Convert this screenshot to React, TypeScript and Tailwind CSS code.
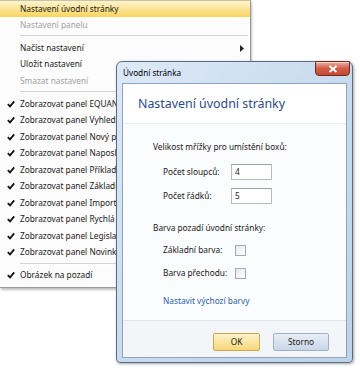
import React from "react";

const Check = () => (
  <svg width="8" height="8" viewBox="0 0 8 8" className="block">
    <path d="M0.8 4.2 L3 6.4 L7.2 1.4" fill="none" stroke="#111" strokeWidth="1.7" />
  </svg>
);

type Item = { label: string; disabled?: boolean; checked?: boolean; hi?: boolean; sub?: boolean } | "sep";

const items: Item[] = [
  { label: "Nastavení úvodní stránky", hi: true },
  { label: "Nastavení panelu", disabled: true },
  "sep",
  { label: "Načíst nastavení", sub: true },
  { label: "Uložit nastavení" },
  { label: "Smazat nastavení", disabled: true },
  "sep",
  { label: "Zobrazovat panel EQUANT", checked: true },
  { label: "Zobrazovat panel Vyhledávání", checked: true },
  { label: "Zobrazovat panel Nový předpis", checked: true },
  { label: "Zobrazovat panel Naposledy", checked: true },
  { label: "Zobrazovat panel Příklady", checked: true },
  { label: "Zobrazovat panel Základní", checked: true },
  { label: "Zobrazovat panel Importy", checked: true },
  { label: "Zobrazovat panel Rychlá volba", checked: true },
  { label: "Zobrazovat panel Legislativa", checked: true },
  { label: "Zobrazovat panel Novinky", checked: true },
  "sep",
  { label: "Obrázek na pozadí", checked: true },
];

function Menu() {
  return (
    <div className="w-[251px] bg-[#fcfcfc] border-r border-b border-[#9a9a9a] shadow-[1px_2px_2px_rgba(0,0,0,0.25)] pb-[3px]">
      {items.map((it, i) =>
        it === "sep" ? (
          <div key={i} className="h-[6.5px] flex items-center pl-[20px] pr-[2px]">
            <div className="h-[2px] w-full border-t border-[#d4d4d4] border-b-white border-b" />
          </div>
        ) : (
          <div
            key={i}
            className={`h-[16.5px] flex items-center relative ${
              it.hi ? "bg-gradient-to-b from-[#fdf4cc] to-[#f9d455] border-t border-[#c9c2a6]" : ""
            }`}
          >
            <div className="w-[20px] flex justify-center pl-[1px]">{it.checked ? <Check /> : null}</div>
            <span className={`whitespace-nowrap ${it.disabled ? "text-[#a2a2a2]" : "text-[#1a1a1a]"}`}>{it.label}</span>
            {it.sub ? (
              <svg width="4" height="7" viewBox="0 0 4 7" className="absolute right-[6px] top-[5px]">
                <path d="M0 0 L4 3.5 L0 7 Z" fill="#222" />
              </svg>
            ) : null}
          </div>
        )
      )}
    </div>
  );
}

function Dialog() {
  return (
    <div className="absolute left-[116px] top-[61px] w-[237px] h-[302px] rounded-t-[6px] rounded-b-[4px] border border-[#5b6c82] bg-gradient-to-br from-[#dde9f7] via-[#c9dbef] to-[#bed2ea] flex flex-col px-[5px] pb-[4px] shadow-[1px_1px_3px_rgba(0,0,0,0.35)]">
      <div className="h-[21px] flex items-center pl-[1px] text-[8.2px] text-black">Úvodní stránka</div>
      <div className="absolute right-[2px] top-[-1px] w-[35px] h-[15px] rounded-b-[4px] border border-[#6e2a22] bg-gradient-to-b from-[#eab0a3] via-[#d25c47] to-[#c44a34] flex items-center justify-center shadow-[inset_0_1px_0_rgba(255,255,255,0.5)]">
        <svg width="10" height="8" viewBox="0 0 10 8">
          <path d="M1.5 1 L8.5 7 M8.5 1 L1.5 7" stroke="#fff" strokeWidth="2" />
        </svg>
      </div>
      <div className="flex-1 border border-[#8ea3bd] flex flex-col bg-white">
        <div className="h-[40px] bg-white flex items-center pl-[15px] border-b border-[#e8edf4]">
          <span className="text-[12.4px] text-[#2a4b92]">Nastavení úvodní stránky</span>
        </div>
        <div className="h-[196px] bg-[#fbfcfe] flex flex-col pl-[30px]">
          <div className="mt-[17px] h-[12px] flex items-center">Velikost mřížky pro umístění boxů:</div>
          <div className="mt-[11px] pl-[10px] flex items-center h-[16px]">
            <span className="w-[68px]">Počet sloupců:</span>
            <div className="w-[41px] h-[16px] border border-[#b5bcc7] border-t-[#9aa2ad] bg-white flex items-center pl-[3px]">4</div>
          </div>
          <div className="mt-[8px] pl-[10px] flex items-center h-[16px]">
            <span className="w-[68px]">Počet řádků:</span>
            <div className="w-[41px] h-[16px] border border-[#b5bcc7] border-t-[#9aa2ad] bg-white flex items-center pl-[3px]">5</div>
          </div>
          <div className="mt-[18px] h-[12px] flex items-center">Barva pozadí úvodní stránky:</div>
          <div className="mt-[10px] pl-[10px] flex items-center h-[12px]">
            <span className="w-[72px]">Základní barva:</span>
            <div className="w-[11px] h-[11px] border border-[#a3a9b2] bg-gradient-to-br from-[#e6e8eb] to-white" />
          </div>
          <div className="mt-[11px] pl-[10px] flex items-center h-[12px]">
            <span className="w-[72px]">Barva přechodu:</span>
            <div className="w-[11px] h-[11px] border border-[#a3a9b2] bg-gradient-to-br from-[#e6e8eb] to-white" />
          </div>
          <div className="mt-[16px] pl-[10px] h-[12px] flex items-center text-[#2a62ad]">Nastavit výchozí barvy</div>
        </div>
        <div className="flex-1 bg-[#f3f5f9] border-t border-[#dfe3ea] flex items-start justify-end pr-[17px] pt-[12px] gap-[13px]">
          <div className="w-[47px] h-[18px] rounded-[2px] border border-[#c9a94f] bg-gradient-to-b from-[#fdf3c9] to-[#f7d677] flex items-center justify-center">OK</div>
          <div className="w-[56px] h-[18px] rounded-[2px] border border-[#9fb1c8] bg-gradient-to-b from-[#e8eef6] to-[#c8d6e8] flex items-center justify-center">Storno</div>
        </div>
      </div>
    </div>
  );
}

export default function App() {
  return (
    <div
      className="relative w-[360px] h-[370px] bg-white overflow-hidden text-[8.3px] text-[#1a1a1a] leading-[12px]"
      style={{ fontFamily: '"Noto Sans", "Open Sans", sans-serif' }}
    >
      <Menu />
      <Dialog />
    </div>
  );
}
